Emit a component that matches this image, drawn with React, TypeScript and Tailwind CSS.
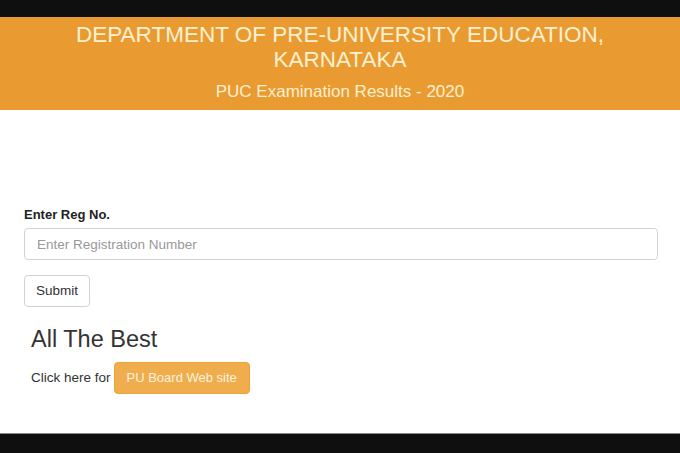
export default function App() {
  return (
    <div className="w-[680px] h-[453px] flex flex-col bg-[#0f0f0f] font-['Liberation_Sans',Arial,sans-serif] overflow-hidden">
      <div className="h-[17px] shrink-0" />
      <header className="h-[93px] shrink-0 bg-[#e99b32] flex flex-col items-center text-[#fbf0cf]">
        <h1 className="mt-[5px] text-[22.5px] leading-[25px] text-center">
          DEPARTMENT OF PRE-UNIVERSITY EDUCATION,
          <br />
          KARNATAKA
        </h1>
        <p className="mt-[10px] text-[17px] leading-[20px]">PUC Examination Results - 2020</p>
      </header>
      <main className="h-[323px] shrink-0 bg-white px-[24px] pt-[96px] text-[#333]">
        <label className="block text-[13px] font-bold leading-[18px] text-[#222]">Enter Reg No.</label>
        <input
          className="mt-[4px] w-[634px] h-[32px] rounded-[4px] border border-[#d2d2d2] px-[12px] text-[13.5px] placeholder:text-[#999] outline-none"
          placeholder="Enter Registration Number"
        />
        <button className="mt-[15px] h-[32px] px-[11px] rounded-[4px] border border-[#d2d2d2] bg-white text-[13.5px] text-[#333]">
          Submit
        </button>
        <div className="pl-[7px]">
          <h2 className="mt-[19px] text-[23.5px] leading-[26px] text-[#333]">All The Best</h2>
          <div className="mt-[10px] flex items-center gap-[3px] text-[13.5px]">
            <span className="text-[#333]">Click here for</span>
            <a className="h-[32px] px-[12px] flex items-center rounded-[4px] bg-[#f0ad4e] border border-[#eea236] text-[13px] text-[#fdf3df]">
              PU Board Web site
            </a>
          </div>
        </div>
      </main>
      <div className="flex-1 border-t border-[#888]" />
    </div>
  );
}
